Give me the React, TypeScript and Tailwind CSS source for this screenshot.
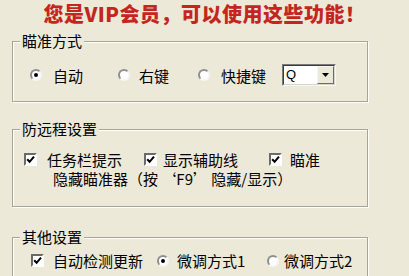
import React from "react";

function Radio({ checked }: { checked?: boolean }) {
  return (
    <span className="inline-flex w-[12px] h-[12px] shrink-0 items-center justify-center rounded-full border-2 border-t-[#8f8f8f] border-l-[#8f8f8f] border-r-[#f6f6f6] border-b-[#f6f6f6] bg-white">
      {checked && <span className="block w-[4px] h-[4px] rounded-full bg-black" />}
    </span>
  );
}

function Check() {
  return (
    <span className="inline-flex w-[13px] h-[13px] shrink-0 items-center justify-center border-2 border-t-[#6a6a6a] border-l-[#6a6a6a] border-r-white border-b-white bg-white">
      <svg width="9" height="9" viewBox="0 0 9 9">
        <path d="M1.2 4.2 L3.6 6.8 L8 1.6" stroke="#000" strokeWidth="2" fill="none" />
      </svg>
    </span>
  );
}

function Group({
  title,
  className,
  children,
}: {
  title: string;
  className: string;
  children: React.ReactNode;
}) {
  return (
    <div
      className={
        "relative ml-[12px] w-[356px] border border-[#a9a590] shadow-[inset_1px_1px_0_#ffffff,1px_1px_0_#ffffff] " +
        className
      }
    >
      <span className="absolute left-[7px] top-[-10px] bg-[#ece9d8] px-[2px] text-[15px] leading-[18px] text-black">
        {title}
      </span>
      {children}
    </div>
  );
}

export default function App() {
  return (
    <div
      lang="zh-CN"
      className="w-[409px] h-[276px] overflow-hidden bg-[#ece9d8] font-['Noto_Sans_CJK_SC',sans-serif] text-black text-[15px]"
    >
      <div className="h-[28px] flex items-center justify-center text-[20px] leading-[28px] font-black text-[#c4261d] tracking-[0.5px]">
        您是VIP会员，可以使用这些功能！
      </div>

      <Group title="瞄准方式" className="mt-[13px] h-[61px]">
        <div className="flex items-center pl-[17px] pt-[21px] h-[45px] leading-[17px]">
          <div className="flex items-center w-[88px] gap-[11px]">
            <Radio checked />
            <span>自动</span>
          </div>
          <div className="flex items-center w-[80px] gap-[9px]">
            <Radio />
            <span>右键</span>
          </div>
          <div className="flex items-center w-[84px] gap-[11px]">
            <Radio />
            <span>快捷键</span>
          </div>
          <div className="flex w-[54px] h-[22px] border border-t-[#7a7a7a] border-l-[#7a7a7a] border-r-[#f8f8f8] border-b-[#f8f8f8]">
            <div className="flex flex-1 border border-t-[#3c3c3c] border-l-[#3c3c3c] border-r-[#d8d5c8] border-b-[#d8d5c8] bg-white">
              <span className="flex-1 pl-[2px] text-[13px] leading-[18px] font-['Liberation_Sans',sans-serif]">Q</span>
              <span className="flex w-[17px] items-center justify-center bg-[#ece9d8] border border-t-[#f5f5f5] border-l-[#f5f5f5] border-r-[#6c6c6c] border-b-[#6c6c6c]">
                <svg width="7" height="4" viewBox="0 0 7 4">
                  <path d="M0 0 H7 L3.5 4 Z" fill="#000" />
                </svg>
              </span>
            </div>
          </div>
        </div>
      </Group>

      <Group title="防远程设置" className="mt-[27px] h-[78px]">
        <div className="flex items-center pl-[11px] pt-[21px] leading-[17px]">
          <div className="flex items-center w-[120px] gap-[10px]">
            <Check />
            <span>任务栏提示</span>
          </div>
          <div className="flex items-center w-[125px] gap-[6px]">
            <Check />
            <span>显示辅助线</span>
          </div>
          <div className="flex items-center gap-[8px]">
            <Check />
            <span>瞄准</span>
          </div>
        </div>
        <div className="pl-[40px] mt-[2px] leading-[17px] whitespace-pre">隐藏瞄准器（按 ‘F9’ 隐藏/显示）</div>
      </Group>

      <Group title="其他设置" className="mt-[30px] h-[60px]">
        <div className="flex items-center pl-[18px] pt-[14px] leading-[17px]">
          <div className="flex items-center w-[126px] gap-[9px]">
            <Check />
            <span>自动检测更新</span>
          </div>
          <div className="flex items-center w-[110px] gap-[8px]">
            <Radio checked />
            <span>微调方式1</span>
          </div>
          <div className="flex items-center gap-[5px]">
            <Radio />
            <span>微调方式2</span>
          </div>
        </div>
      </Group>
    </div>
  );
}
